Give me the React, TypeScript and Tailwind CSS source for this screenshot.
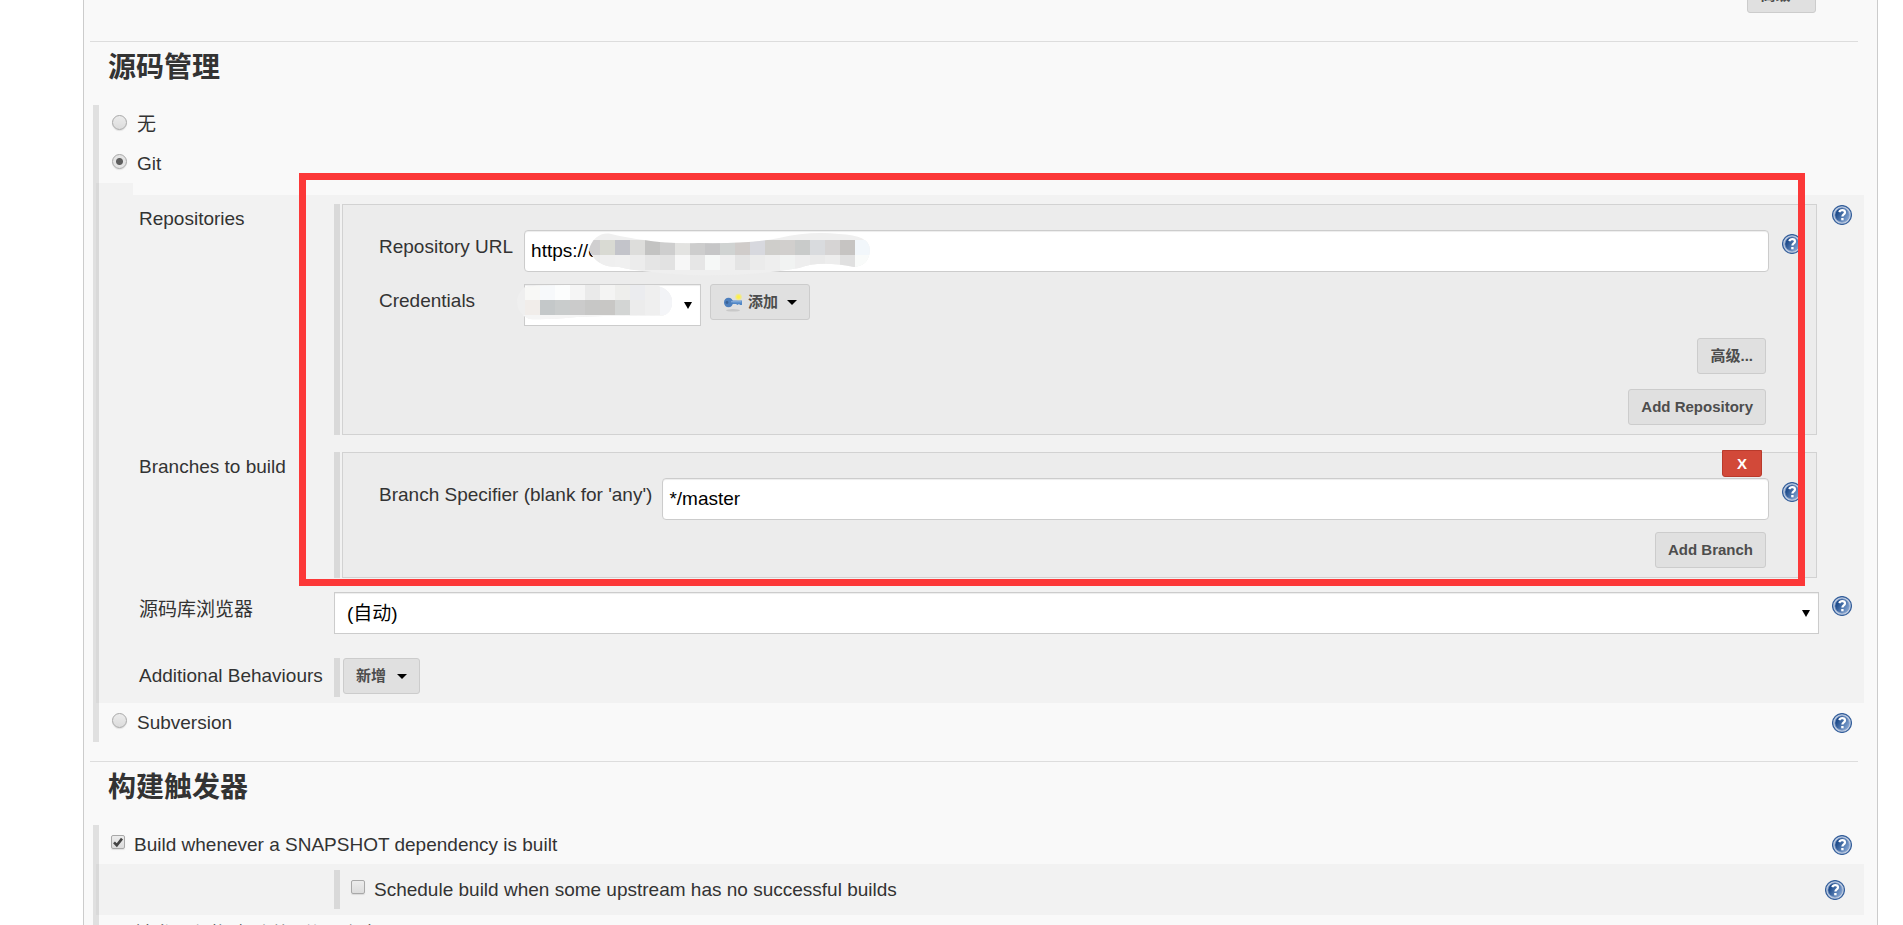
import type { ButtonHTMLAttributes, ReactNode } from "react";

function HelpIcon() {
  return (
    <a href="#help" aria-label="Help" className="block size-5 shrink-0">
      <svg viewBox="0 0 20 20" className="block size-5">
        <defs>
          <linearGradient id="helpFill" x1="0" y1="0.2" x2="1" y2="0.8">
            <stop offset="0.2" stopColor="#204d8c" />
            <stop offset="1" stopColor="#88a9d6" />
          </linearGradient>
        </defs>
        <circle cx="10" cy="10" r="9.4" fill="#c3cfe2" stroke="#36609c" strokeWidth="1.3" />
        <circle cx="10" cy="10" r="7.2" fill="url(#helpFill)" stroke="#7d9bc8" strokeWidth="0.8" />
        <path d="M7.3 7.2C7.8 5.6 9 5.1 10.3 5.1c1.600 0 2.700 0.900 2.700 2.300 0 2.100-2.600 2-2.600 4.200" fill="none" stroke="#fff" strokeWidth="2.2" />
        <rect x="9.200" y="13" width="2.400" height="2.300" fill="#fff" />
      </svg>
    </a>
  );
}

function KeyIcon() {
  return (
    <svg viewBox="0 0 20 20" className="size-5 shrink-0">
      <defs>
        <radialGradient id="glow">
          <stop offset="0.300" stopColor="#fdf04a" />
          <stop offset="1" stopColor="#fdf04a" stopOpacity="0.200" />
        </radialGradient>
      </defs>
      <ellipse cx="10" cy="18.300" rx="7" ry="1.200" fill="#bdbdbd" opacity="0.700" />
      <path d="M8 8.500h11v4.500h-2l-1-1-1.500 1-1.500-1H8z" fill="#5288c7" />
      <ellipse cx="5.500" cy="10.500" rx="4.500" ry="4.800" fill="#4d7fbd" />
      <path d="M8 9.800h10.500" stroke="#8db4e2" strokeWidth="1" />
      <circle cx="4" cy="10.500" r="1.400" fill="#3a6296" />
      <circle cx="15.500" cy="5" r="3.600" fill="url(#glow)" />
    </svg>
  );
}

function Caret() {
  return (
    <svg viewBox="0 0 10 5" className="h-[5px] w-[10px]">
      <path d="M0 0h10L5 5z" fill="#000" />
    </svg>
  );
}

function Button({ children, className = "", ...rest }: { children: ReactNode } & ButtonHTMLAttributes<HTMLButtonElement>) {
  return (
    <button
      type="button"
      className={`flex h-9 items-center rounded-[3px] border border-[#cccccc] bg-[#e0e0e0] px-3 text-[15px] font-bold text-[#4d4d4d] ${className}`}
      {...rest}
    >
      {children}
    </button>
  );
}

function Radio({ id, checked = false }: { id: string; checked?: boolean }) {
  return (
    <input
      id={id}
      type="radio"
      name="scm"
      defaultChecked={checked}
      className="mt-1 size-[15px] shrink-0 appearance-none rounded-full border border-[#a8a8a8] bg-linear-to-b from-[#ececec] to-[#dcdcdc] shadow-[0_1px_1px_rgba(0,0,0,0.1)] checked:bg-[radial-gradient(circle,#5e5e5e_3px,#e4e4e4_4px)]"
    />
  );
}

function Checkbox({ id, checked = false }: { id: string; checked?: boolean }) {
  return (
    <span className="mt-1 grid size-[14px] shrink-0">
      <input
        id={id}
        type="checkbox"
        defaultChecked={checked}
        className="peer col-start-1 row-start-1 size-[14px] appearance-none rounded-[2px] border border-[#a8a8a8] bg-linear-to-b from-[#ececec] to-[#dcdcdc] shadow-[0_1px_1px_rgba(0,0,0,0.1)]"
      />
      <svg viewBox="0 0 14 14" className="pointer-events-none col-start-1 row-start-1 hidden size-[14px] peer-checked:block">
        <path d="M3 7.300l2.800 2.900L11 3.600" fill="none" stroke="#444" strokeWidth="2.600" />
      </svg>
    </span>
  );
}

function Option({ id, label, control, help = false, className }: { id: string; label: string; control: ReactNode; help?: boolean; className: string }) {
  return (
    <div className={`flex items-start pt-[6px] pb-[7px] ${className}`}>
      {control}
      <label htmlFor={id} className="flex-1 pt-[2px]">
        {label}
      </label>
      {help && (
        <div className="pt-1">
          <HelpIcon />
        </div>
      )}
    </div>
  );
}

const inputClass =
  "h-[42px] w-full min-w-0 rounded-[4px] border border-[#cccccc] bg-white px-[6px] text-black shadow-[inset_0_1px_1px_rgba(0,0,0,0.075)] outline-none";
const selectClass =
  "h-[42px] w-full appearance-none border border-[#cccccc] bg-white px-3 pt-[2px] text-black shadow-[inset_0_1px_1px_rgba(0,0,0,0.075)] outline-none";

function SelectArrow() {
  return (
    <svg viewBox="0 0 8 7" className="pointer-events-none absolute top-[18px] right-[9px] h-[7px] w-2">
      <path d="M0 0h8L4 7z" fill="#000" />
    </svg>
  );
}

function Box({ children }: { children: ReactNode }) {
  return (
    <div className="flex flex-1 gap-[2px]">
      <div className="w-[6px] shrink-0 bg-[#d9d9d9]" />
      <div className="mr-[2px] flex-1 border border-[#d2d2d2] bg-[#ececec] pt-[25px] pr-[14px] pb-[9px] pl-9">{children}</div>
    </div>
  );
}

function Row({ label, htmlFor, help = true, low = false, children }: { label: string; htmlFor?: string; help?: boolean; low?: boolean; children: ReactNode }) {
  return (
    <div className="flex">
      <label htmlFor={htmlFor} className={`w-[195px] shrink-0 whitespace-nowrap ${low ? "pt-[6px]" : "pt-[3px]"}`}>
        {label}
      </label>
      {children}
      <div className={`w-[45px] shrink-0 pl-[13px] ${low ? "pt-1" : "pt-[1px]"}`}>{help && <HelpIcon />}</div>
    </div>
  );
}

function Heading({ children }: { children: ReactNode }) {
  return (
    <h2 className="mr-[19px] ml-[6px] border-t border-[#dddddd] pt-2 pl-[18px] text-[28px] leading-9 font-bold">{children}</h2>
  );
}

type Pixel = { x: number; y: number; w: number; h: number; c: string };

function Mosaic({ pixels, outline, id, className }: { pixels: Pixel[]; outline: string; id: string; className: string }) {
  return (
    <svg className={`pointer-events-none absolute ${className}`}>
      <clipPath id={id}>
        <path d={outline} />
      </clipPath>
      <g clipPath={`url(#${id})`}>
        <rect width="100%" height="100%" fill="#efefef" />
        {pixels.map((p, i) => (
          <rect key={i} x={p.x} y={p.y} width={p.w} height={p.h} fill={p.c} shapeRendering="crispEdges" />
        ))}
      </g>
    </svg>
  );
}

const strip = (colors: string[], x: number, y: number, w = 15, h = 15): Pixel[] =>
  colors.map((c, i) => ({ x: x + i * w, y, w, h, c }));

const urlPixels = [
  ...strip(["#d0cfd0", "#d9dad3", "#c3c4ca", "#dddddb", "#c3c3c2", "#cecece", "#e3e3e1", "#cdcdcd", "#c6c6c7", "#d0d3d2", "#d0ccca", "#d7d8de", "#cfcecb", "#d1cfcd", "#c9cbca", "#d9dbde", "#d6d4d4", "#c6c4c2", "#f2f7fb"], -4, 8),
  ...strip(["#ebebeb", "#efefef", "#f0f0f0", "#ececec", "#e5e5e5", "#e2e2e2", "#f7f7f7", "#e6e6e6", "#f6f8f7", "#efefef", "#e4e4e4", "#ebebeb", "#eeeeee", "#f1f3f2", "#eeeeee", "#eaeaea", "#ededed", "#e0e0e0", "#f9fbfa"], -4, 23),
];
const credentialPixels = [
  ...strip(["#f8f8f6", "#f7f9fb", "#fcfdfd", "#f5f5f5", "#eaeaea", "#f4f4f3", "#eeeeec", "#ebecef", "#efefef", "#f2f3f6"], 8, 0),
  ...strip(["#f1edea", "#c4c8c9", "#c9cccc", "#cbcbcb", "#c7c7c6", "#c8c7c5", "#d3d5d4", "#ececec", "#efefef", "#f4f5f8"], 8, 15),
  { x: 0, y: 30, w: 160, h: 8, c: "#f5f5f5" },
];

export default function App() {
  return (
    <div className="flex h-screen overflow-hidden bg-white pr-[25px] pl-[83px] font-['Liberation_Sans','Noto_Sans_CJK_SC',sans-serif] text-[19px] leading-6 text-[#333333]">
      <main className="min-w-0 flex-1 border-x border-[#cccccc] bg-[#f9f9f9]">
        <div className="-mt-[23px] mb-[28px] flex justify-end pr-[61px]">
          <Button>高级...</Button>
        </div>

        <Heading>源码管理</Heading>
        <section className="mt-[19px] mr-[13px] ml-[9px] border-l-[6px] border-[#e0e0e0]">
          <Option id="scm-none" label="无" control={<Radio id="scm-none" />} className="gap-[10px] pr-3 pl-[13px]" />
          <Option id="scm-git" label="Git" control={<Radio id="scm-git" checked />} className="gap-[10px] pr-3 pl-[13px]" />

          <div className="relative -ml-[3px]">
            <div className="h-3 w-[37px] bg-[rgba(0,0,0,0.027)]" />
            <div className="flex flex-col bg-[rgba(0,0,0,0.027)] pt-[9px] pb-[6px] pl-[43px]">
              <Row label="Repositories">
                <Box>
                  <div className="grid grid-cols-[auto_1fr_auto] gap-y-3">
                    <label htmlFor="repo-url" className="pt-[5px] pr-[11px]">Repository URL</label>
                    <div className="relative">
                      <input id="repo-url" defaultValue="https://c" className={inputClass} />
                      <Mosaic
                        id="url-mask"
                        className="top-[2px] left-[65px] h-[44px] w-[285px]"
                        pixels={urlPixels}
                        outline="M0 18 C3 6 12 0 22 2 Q40 6 55 8 Q80 12 110 11 Q160 12 190 6 Q220 -1 250 2 Q281 3 281 18 Q280 34 265 35 Q230 28 210 36 Q160 45 100 43 Q50 40 30 35 Q8 36 0 18Z"
                      />
                    </div>
                    <div className="pt-1 pl-[13px]"><HelpIcon /></div>
                    <label htmlFor="credentials" className="pt-[5px]">Credentials</label>
                    <div className="flex gap-[9px]">
                      <div className="relative w-[177px]">
                        <select id="credentials" className={selectClass}><option></option></select>
                        <SelectArrow />
                        <Mosaic
                          id="credential-mask"
                          className="top-[1px] -left-[7px] h-[36px] w-[156px]"
                          pixels={credentialPixels}
                          outline="M8 2 Q20 0 50 0 H135 Q153 2 155 15 Q156 28 145 31 Q100 30 60 32 Q30 35 12 34 Q0 28 0 17 Q0 8 8 2Z"
                        />
                      </div>
                      <Button className="gap-[5px]">
                        <KeyIcon />
                        <span>添加</span>
                        <span className="pl-1"><Caret /></span>
                      </Button>
                    </div>
                  </div>
                  <div className="flex flex-col items-end gap-[15px] pt-3 pr-9">
                    <Button>高级...</Button>
                    <Button>Add Repository</Button>
                  </div>
                </Box>
              </Row>

              <div className="h-[17px]" />
              <Row label="Branches to build" help={false}>
                <Box>
                  <div className="relative flex">
                    <label htmlFor="branch" className="shrink-0 pt-[5px] pr-[10px]">Branch Specifier (blank for 'any')</label>
                    <input id="branch" defaultValue="*/master" className={inputClass} />
                    <div className="pt-1 pl-[13px]"><HelpIcon /></div>
                    <button
                      type="button"
                      className="absolute -top-7 right-10 flex h-[27px] w-10 items-center justify-center rounded-b-[3px] border border-[#b93a2b] bg-[#d24939] text-[15px] font-bold text-white"
                    >
                      X
                    </button>
                  </div>
                  <div className="flex justify-end pt-3 pr-9">
                    <Button>Add Branch</Button>
                  </div>
                </Box>
              </Row>

              <div className="h-[14px]" />
              <Row label="源码库浏览器" htmlFor="browser" low>
                <div className="relative flex-1">
                  <select id="browser" className={selectClass}>
                    <option>(自动)</option>
                  </select>
                  <SelectArrow />
                </div>
              </Row>

              <div className="h-6" />
              <Row label="Additional Behaviours" help={false} low>
                <div className="flex flex-1 gap-[3px]">
                  <div className="h-[39px] w-[6px] bg-[#d9d9d9]" />
                  <Button className="gap-[11px]">
                    新增 <Caret />
                  </Button>
                </div>
              </Row>
            </div>
            <div className="pointer-events-none absolute -top-[10px] right-[59px] bottom-[117px] left-[203px] border-[7px] border-[#fc3838]" />
          </div>

          <Option id="scm-svn" label="Subversion" control={<Radio id="scm-svn" />} help className="gap-[10px] pr-3 pl-[13px]" />
        </section>

        <div className="h-[19px]" />
        <Heading>构建触发器</Heading>
        <section className="mt-[19px] mr-[13px] ml-[9px] border-l-[6px] border-[#e0e0e0]">
          <Option
            id="snapshot"
            label="Build whenever a SNAPSHOT dependency is built"
            control={<Checkbox id="snapshot" checked />}
            help
            className="gap-[9px] pr-3 pl-3"
          />
          <div className="-ml-[3px] bg-[rgba(0,0,0,0.027)] py-[6px] pr-[19px] pl-[238px]">
            <Option
              id="schedule"
              label="Schedule build when some upstream has no successful builds"
              control={<Checkbox id="schedule" />}
              help
              className="gap-[9px] border-l-[6px] border-[#d9d9d9] pl-[11px]"
            />
          </div>
          <Option
            id="remote"
            label="触发远程构建 (例如,使用脚本)"
            control={<Checkbox id="remote" />}
            help
            className="gap-[9px] pr-3 pl-3"
          />
        </section>
      </main>
    </div>
  );
}
